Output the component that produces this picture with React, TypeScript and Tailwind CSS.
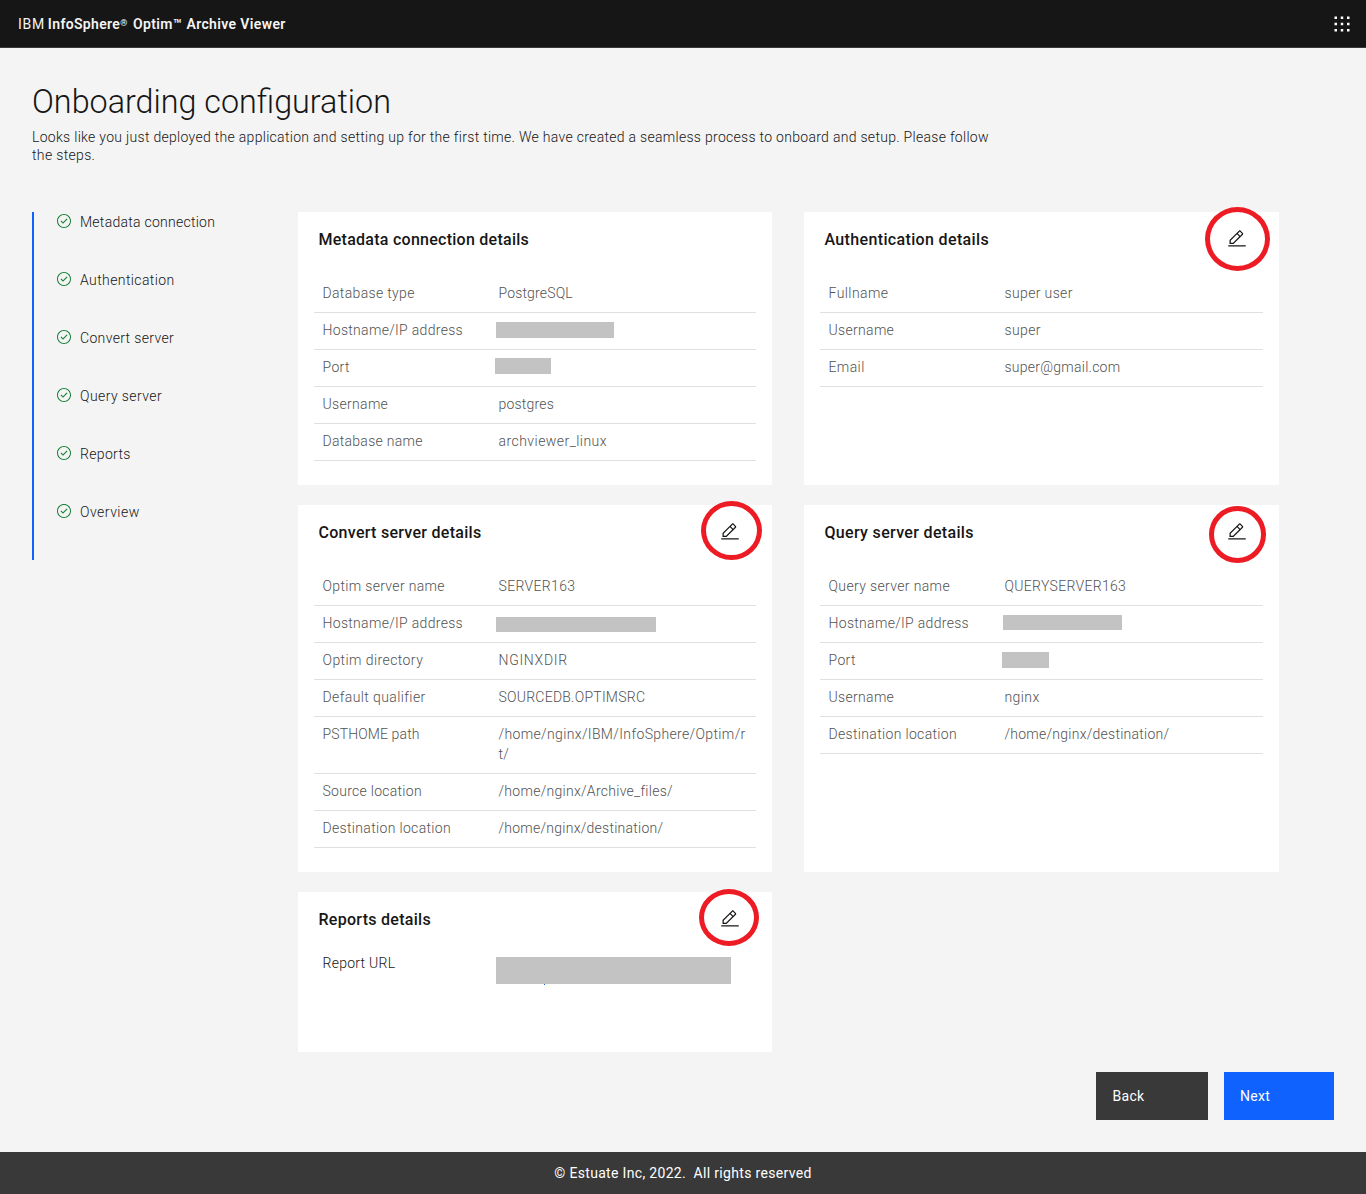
import type { ReactNode } from "react";

type Row = {
  label: string;
  labelClass: string;
  value?: ReactNode;
  valueClass?: string;
  barClass?: string;
};

const steps = [
  { label: "Metadata connection", tracking: "tracking-[0.26px]" },
  { label: "Authentication", tracking: "tracking-[0.4px]" },
  { label: "Convert server", tracking: "tracking-[0.34px]" },
  { label: "Query server", tracking: "tracking-[0.42px]" },
  { label: "Reports", tracking: "tracking-[0.34px]" },
  { label: "Overview", tracking: "tracking-[0.48px]" },
];

const metadataRows: Row[] = [
  { label: "Database type", labelClass: "tracking-[0.34px]", value: "PostgreSQL", valueClass: "tracking-[0.16px]" },
  { label: "Hostname/IP address", labelClass: "tracking-[0.31px]", barClass: "-ml-[2.5px] mt-0.5 h-4 w-[118px]" },
  { label: "Port", labelClass: "tracking-[0.35px]", barClass: "-ml-[3.5px] mt-px h-4 w-14" },
  { label: "Username", labelClass: "tracking-[0.32px]", value: "postgres", valueClass: "tracking-[0.2px]" },
  { label: "Database name", labelClass: "tracking-[0.28px]", value: "archviewer_linux", valueClass: "tracking-[0.46px]" },
];

const authenticationRows: Row[] = [
  { label: "Fullname", labelClass: "tracking-[0.42px]", value: "super user", valueClass: "tracking-[0.36px]" },
  { label: "Username", labelClass: "tracking-[0.32px]", value: "super", valueClass: "tracking-[0.36px]" },
  { label: "Email", labelClass: "tracking-[0.4px]", value: "super@gmail.com", valueClass: "tracking-[0.25px]" },
];

const convertRows: Row[] = [
  { label: "Optim server name", labelClass: "tracking-[0.33px]", value: "SERVER163", valueClass: "tracking-[0.34px]" },
  { label: "Hostname/IP address", labelClass: "tracking-[0.31px]", barClass: "-ml-[2.5px] mt-1 h-[15px] w-40" },
  { label: "Optim directory", labelClass: "tracking-[0.42px]", value: "NGINXDIR", valueClass: "tracking-[0.7px]" },
  { label: "Default qualifier", labelClass: "tracking-[0.4px]", value: "SOURCEDB.OPTIMSRC", valueClass: "tracking-[0.24px]" },
  {
    label: "PSTHOME path",
    labelClass: "tracking-[0.12px]",
    value: (
      <>
        /home/nginx/IBM/InfoSphere/Optim/r
        <br />
        t/
      </>
    ),
    valueClass: "tracking-[0.36px]",
  },
  { label: "Source location", labelClass: "tracking-[0.28px]", value: "/home/nginx/Archive_files/", valueClass: "tracking-[0.28px]" },
  { label: "Destination location", labelClass: "tracking-[0.33px]", value: "/home/nginx/destination/", valueClass: "tracking-[0.25px]" },
];

const queryRows: Row[] = [
  { label: "Query server name", labelClass: "tracking-[0.36px]", value: "QUERYSERVER163", valueClass: "tracking-[0.31px]" },
  { label: "Hostname/IP address", labelClass: "tracking-[0.31px]", barClass: "-ml-[1.5px] mt-0.5 h-[15px] w-[119px]" },
  { label: "Port", labelClass: "tracking-[0.35px]", barClass: "-ml-[2.5px] mt-0.5 h-4 w-[47px]" },
  { label: "Username", labelClass: "tracking-[0.32px]", value: "nginx", valueClass: "tracking-[0.4px]" },
  { label: "Destination location", labelClass: "tracking-[0.33px]", value: "/home/nginx/destination/", valueClass: "tracking-[0.25px]" },
];

function CheckIcon() {
  return (
    <svg viewBox="0 0 16 16" className="size-4 shrink-0 fill-[#198038]">
      <path d="M8,1C4.1,1,1,4.1,1,8s3.1,7,7,7s7-3.1,7-7S11.9,1,8,1z M8,14c-3.3,0-6-2.7-6-6s2.7-6,6-6s6,2.7,6,6S11.3,14,8,14z" />
      <path d="M7 10.8 4.5 8.3 5.3 7.5 7 9.2 10.7 5.5 11.5 6.3z" />
    </svg>
  );
}

function EditIcon() {
  return (
    <svg viewBox="0 0 32 32" className="size-5 fill-[#161616]">
      <path d="M2 26H30V28H2z" />
      <path d="M25.4,9c0.8-0.8,0.8-2,0-2.8l-3.6-3.6c-0.8-0.8-2-0.8-2.8,0l-15,15V24h6.4L25.4,9z M20.4,4L24,7.6l-3,3L17.4,7L20.4,4z M6,22v-3.6l10-10l3.6,3.6l-10,10H6z" />
    </svg>
  );
}

function SwitcherIcon() {
  return (
    <svg viewBox="0 0 32 32" className="size-5 fill-white">
      <path d="M14 4H18V8H14zM4 4H8V8H4zM24 4H28V8H24zM14 14H18V18H14zM4 14H8V18H4zM24 14H28V18H24zM14 24H18V28H14zM4 24H8V28H4zM24 24H28V28H24z" />
    </svg>
  );
}

function Card({
  title,
  titleClass,
  circleClass,
  children,
}: {
  title: string;
  titleClass: string;
  circleClass?: string;
  children: ReactNode;
}) {
  return (
    <section className="relative bg-white px-4">
      <header className="flex h-16 justify-between pl-[4.5px] pr-4 pt-[17px]">
        <h2 className={`text-base leading-[22px] font-[550] whitespace-nowrap ${titleClass}`}>{title}</h2>
        {circleClass && (
          <button type="button" aria-label={`Edit ${title}`} className="size-5">
            <EditIcon />
          </button>
        )}
      </header>
      {children}
      {circleClass && <span className={`absolute rounded-[50%] border-5 border-[#ed1c24] ${circleClass}`} />}
    </section>
  );
}

function DetailRows({ rows }: { rows: Row[] }) {
  return (
    <dl>
      {rows.map((row) => (
        <div key={row.label} className="flex border-b border-[#e0e0e0] pt-[7px] pr-2 pb-[9px] pl-[8.5px] text-sm leading-5 text-[#525252]">
          <dt className={`w-44 shrink-0 ${row.labelClass}`}>{row.label}</dt>
          <dd className={`h-full whitespace-nowrap ${row.valueClass ?? ""}`}>
            {row.value ?? <div className={`bg-[#c3c3c3] ${row.barClass ?? ""}`} />}
          </dd>
        </div>
      ))}
    </dl>
  );
}

export default function App() {
  return (
    <div className="flex h-[1194px] w-[1366px] flex-col bg-[#f4f4f4] font-['Roboto','Open_Sans',sans-serif] font-[360] text-[#161616]">
      <header className="flex h-12 items-center justify-between border-b border-[#393939] bg-[#161616] pl-[18px] pr-3.5 text-sm text-[#f4f4f4]">
        <p className="flex gap-[3px] whitespace-nowrap">
          <span className="font-normal tracking-[0.7px]">IBM</span>
          <span className="font-semibold tracking-[0.34px]">
            InfoSphere<span className="inline-block w-[9px] align-[3px] text-[9px] leading-none">®</span> Optim
            <span className="tracking-[1px]">™</span> <span className="tracking-[0.37px]">Archive Viewer</span>
          </span>
        </p>
        <SwitcherIcon />
      </header>

      <main className="flex-1 px-8 pt-8">
        <h1 className="h-10 text-[32.3px] leading-[44px] font-light">Onboarding configuration</h1>
        <p className="mt-2 text-sm leading-[18px] whitespace-nowrap">
          <span className="tracking-[0.295px]">
            Looks like you just deployed the application and setting up for the first time. We have created a seamless
            process to onboard and setup. Please follow
          </span>
          <br />
          <span className="tracking-[0.34px]">the steps.</span>
        </p>

        <div className="mt-12 flex">
          <ol className="h-[348px] w-[266px] shrink-0 border-l-2 border-[#0f62fe] pl-[22px]">
            {steps.map((step) => (
              <li key={step.label} className="flex h-[58px] gap-2 text-sm leading-5">
                <span className="pt-px">
                  <CheckIcon />
                </span>
                <span className={step.tracking}>{step.label}</span>
              </li>
            ))}
          </ol>

          <div className="grid w-[981px] grid-cols-[474px_475px] grid-rows-[273px_367px_160px] gap-x-8 gap-y-5">
            <Card title="Metadata connection details" titleClass="tracking-[0.26px]">
              <DetailRows rows={metadataRows} />
            </Card>
            <Card title="Authentication details" titleClass="tracking-[0.35px]" circleClass="-top-[5px] left-[401px] h-16 w-[65px]">
              <DetailRows rows={authenticationRows} />
            </Card>
            <Card title="Convert server details" titleClass="tracking-[0.28px]" circleClass="-top-1 left-[403px] h-[59px] w-[61px]">
              <DetailRows rows={convertRows} />
            </Card>
            <Card title="Query server details" titleClass="tracking-[0.33px]" circleClass="top-px left-[405px] size-[57px]">
              <DetailRows rows={queryRows} />
            </Card>
            <Card title="Reports details" titleClass="tracking-[0.28px]" circleClass="-top-[3px] left-[401px] h-[57px] w-[60px]">
              <div className="flex pr-2 pl-[8.5px] text-sm leading-5">
                <span className="-mt-[3px] w-44 tracking-[0.26px]">Report URL</span>
                <div className="-ml-[2.5px] mt-px h-[27px] w-[235px] bg-[#c3c3c3]">
                  <div className="mt-[27px] ml-12 size-px bg-[#0f62fe]" />
                </div>
              </div>
            </Card>
          </div>
        </div>

        <div className="mt-5 flex justify-end gap-4 text-sm font-normal text-white">
          <button type="button" className="h-12 w-28 bg-[#393939] pl-[16.5px] text-left tracking-[0.28px]">
            Back
          </button>
          <button type="button" className="h-12 w-[110px] bg-[#0f62fe] pl-4 text-left tracking-[0.28px]">
            Next
          </button>
        </div>
      </main>

      <footer className="flex h-[42px] items-center justify-center bg-[#393939] text-sm font-[450] whitespace-pre text-white">
        <span className="tracking-[0.32px]">{"© Estuate Inc, 2022.  All rights reserved"}</span>
      </footer>
    </div>
  );
}
